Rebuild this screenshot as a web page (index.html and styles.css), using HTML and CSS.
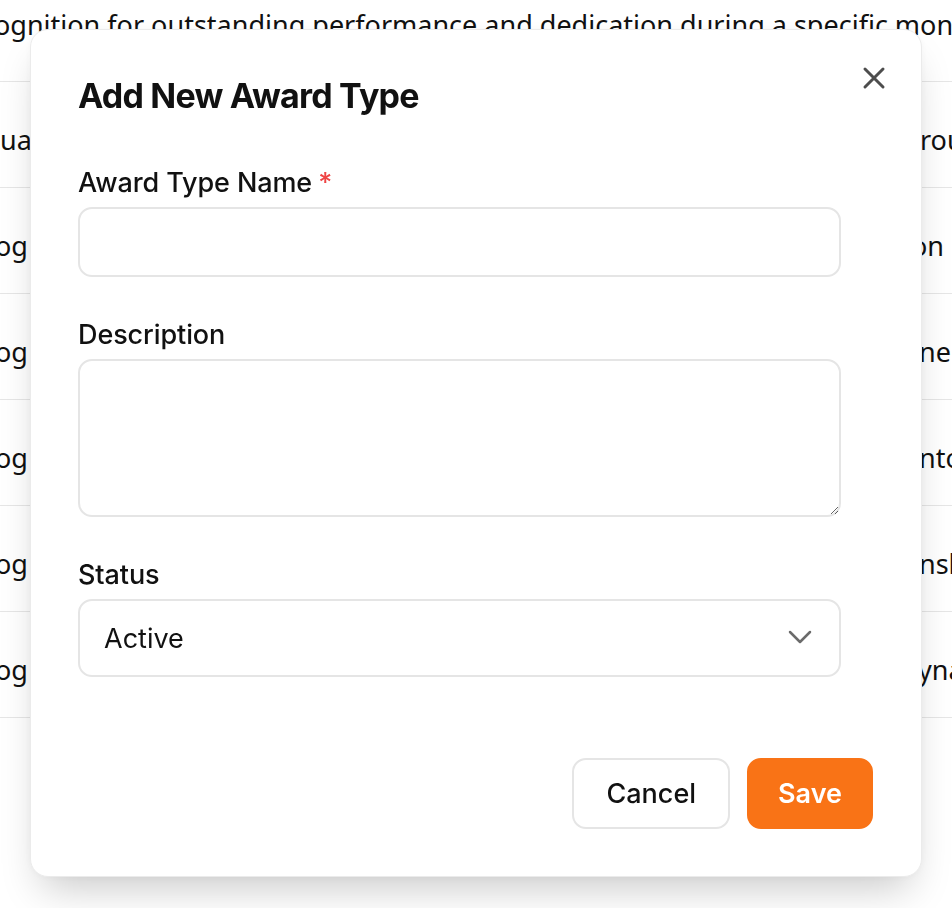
FILE: index.html
```html
<!DOCTYPE html>
<html lang="en">
<head>
<meta charset="utf-8">
<title>Add New Award Type</title>
<link rel="stylesheet" href="styles.css">
</head>
<body>
<div class="table">
  <div class="row row-first"><span class="desc">Recognition for outstanding performance and dedication during a specific month.</span></div>
  <div class="row"><span class="left"><span class="t t-ua">ual Contribution</span></span><span class="right s920">roup Achievement</span></div>
  <div class="row"><span class="left"><span class="t">og Award</span></span><span class="right s911">on</span></div>
  <div class="row"><span class="left"><span class="t">og Award</span></span><span class="right s919">ne Award</span></div>
  <div class="row"><span class="left"><span class="t">og Award</span></span><span class="right s919">ntorship</span></div>
  <div class="row"><span class="left"><span class="t">og Award</span></span><span class="right s919">nship Award</span></div>
  <div class="row"><span class="left"><span class="t">og Award</span></span><span class="right s918">ynamic Leader</span></div>
</div>

<div class="overlay">
  <div class="modal">
    <button class="close" type="button" aria-label="Close">
      <svg width="36" height="36" viewBox="0 0 24 24" fill="none" stroke="currentColor" stroke-width="2" stroke-linecap="round"><path d="M18 6L6 18M6 6l12 12"/></svg>
    </button>
    <h2 class="title">Add New Award Type</h2>
    <form class="form">
      <div class="field">
        <label class="label">Award Type Name<span class="req">*</span></label>
        <input class="input" type="text">
      </div>
      <div class="field">
        <label class="label">Description</label>
        <textarea class="textarea"></textarea>
      </div>
      <div class="field">
        <label class="label">Status</label>
        <div class="select-wrap">
          <select class="select"><option>Active</option><option>Inactive</option></select>
          <svg class="chev" width="40" height="40" viewBox="0 0 24 24" fill="none" stroke="currentColor" stroke-width="1.5" stroke-linecap="round" stroke-linejoin="round"><path d="M6 9l6 6 6-6"/></svg>
        </div>
      </div>
    </form>
    <div class="actions">
      <button class="btn btn-cancel" type="button">Cancel</button>
      <button class="btn btn-save" type="button">Save</button>
    </div>
  </div>
</div>
</body>
</html>
```

FILE: styles.css
```css
* { box-sizing: border-box; }
html, body { margin: 0; padding: 0; }
body {
  width: 952px;
  height: 908px;
  overflow: hidden;
  background: #ffffff;
  color: #111111;
  font-family: "Noto Sans", "Open Sans", sans-serif;
}

/* background table */
.table { width: 952px; }
.row {
  height: 106px;
  border-bottom: 1px solid #e6e6e6;
  padding-top: 40px;
  font-size: 27px;
  line-height: 36px;
  white-space: nowrap;
  display: flex;
  overflow: hidden;
}
.row-first {
  margin-top: -24px;
  padding-top: 31px;
}
.desc { margin-left: -51px; }
.left { flex: none; width: 921px; overflow: hidden; }
.t { display: inline-block; margin-left: -5px; }
.t-ua { margin-left: 0; }
.right { flex: none; }
.s920 { margin-left: -1px; }
.s911 { margin-left: -10px; }
.s919 { margin-left: -2px; }
.s918 { margin-left: -3px; }

/* modal */
.overlay {
  position: fixed;
  inset: 0;
}
.modal {
  position: absolute;
  left: 30px;
  top: 29px;
  width: 892px;
  height: 848px;
  background: #ffffff;
  border: 1px solid #ebebeb;
  border-radius: 18px;
  box-shadow: 0 22px 40px -12px rgba(0, 0, 0, 0.22), 0 0 10px rgba(0, 0, 0, 0.04);
  padding: 46px 48px 47px 47px;
  display: flex;
  flex-direction: column;
  font-family: "Inter", "Noto Sans", sans-serif;
  color: #111111;
}
.close {
  position: absolute;
  top: 30px;
  right: 29px;
  width: 36px;
  height: 36px;
  padding: 0;
  border: none;
  background: none;
  color: #4d4d4d;
  display: block;
}
.close svg { display: block; }
.title {
  margin: 0 0 49px 0;
  font-size: 34px;
  line-height: 40px;
  font-weight: 700;
  letter-spacing: -0.8px;
}
.form { width: 763px; display: flex; flex-direction: column; gap: 40px; }
.label {
  display: block;
  font-size: 27px;
  line-height: 36px;
  font-weight: 500;
  margin-bottom: 6px;
  letter-spacing: -0.1px;
}
.req { color: #ef4444; margin-left: 6px; }
.input, .textarea, .select {
  display: block;
  width: 100%;
  border: 2px solid #e5e5e5;
  border-radius: 14px;
  background: #ffffff;
  font-family: inherit;
  font-size: 27px;
  color: #111111;
  outline: none;
}
.input { height: 70px; padding: 0 24px; }
.textarea { height: 158px; padding: 16px 24px; resize: vertical; }
.select-wrap { position: relative; }
.select {
  height: 78px;
  padding: 0 60px 0 24px;
  appearance: none;
  -webkit-appearance: none;
  font-weight: 400;
}
.chev {
  position: absolute;
  right: 21px;
  top: 18px;
  color: #6b6b6b;
  pointer-events: none;
}
.actions {
  margin-top: auto;
  display: flex;
  justify-content: flex-end;
  gap: 17px;
}
.btn {
  height: 71px;
  border-radius: 14px;
  font-family: inherit;
  font-size: 27px;
}
.btn-cancel {
  padding: 0 32px;
  background: #ffffff;
  border: 2px solid #e5e5e5;
  color: #111111;
  font-weight: 500;
}
.btn-save {
  padding: 0 29px;
  background: #f97316;
  border: 2px solid #f97316;
  color: #ffffff;
  font-weight: 600;
}
```
